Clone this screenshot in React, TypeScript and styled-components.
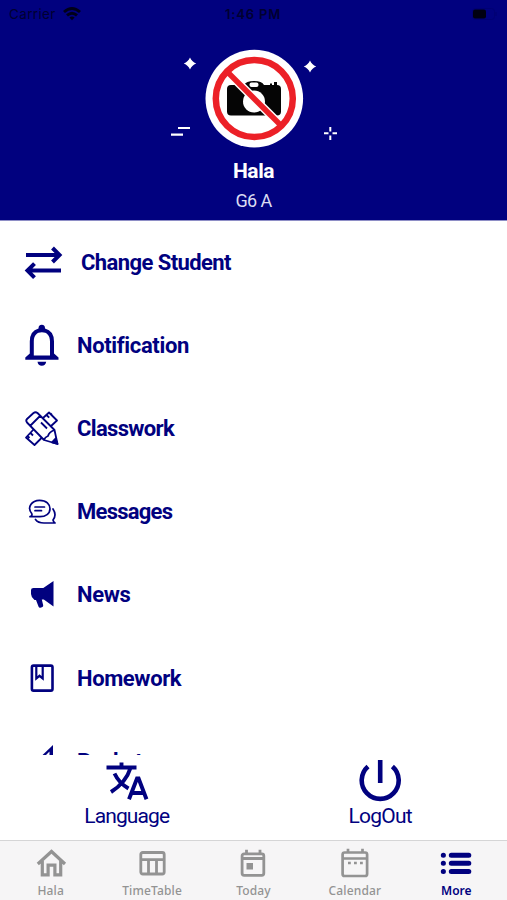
import React from "react";
import styled, { createGlobalStyle } from "styled-components";

const NAVY = "#01017f";
const GREY = "#939393";

const Global = createGlobalStyle`
  * { box-sizing: border-box; }
  html, body { margin: 0; background: #fff; }
  body { font-family: Roboto, "Noto Sans", sans-serif; color: ${NAVY}; }
  svg { display: block; overflow: visible; }
`;

const Screen = styled.div`
  width: 507px;
  height: 900px;
  display: flex;
  flex-direction: column;
  overflow: hidden;
`;

const Header = styled.header`
  height: 221px;
  flex: none;
  background: ${NAVY};
  border-bottom: 1px solid #8e8ec6;
  display: flex;
  flex-direction: column;
  align-items: center;
`;

const StatusBar = styled.div`
  width: 100%;
  height: 28px;
  padding: 0 10px 0 9px;
  display: grid;
  grid-template-columns: 1fr auto 1fr;
  align-items: center;
  font: 13.5px Inter, sans-serif;
  color: #000030;
`;

const Carrier = styled.div`
  display: flex;
  align-items: center;
  gap: 7px;
  letter-spacing: 0.35px;
`;

const Clock = styled.div`
  font-weight: 600;
  font-size: 13px;
  letter-spacing: 0.8px;
`;

const Battery = styled.div`
  justify-self: end;
`;

const Hero = styled.div`
  width: 170px;
  height: 104px;
  margin-top: 18px;
`;

const StudentName = styled.div`
  margin-top: 8px;
  font-size: 21px;
  line-height: 26px;
  font-weight: 700;
  letter-spacing: -0.45px;
  color: #fff;
`;

const Grade = styled.div`
  margin-top: 6px;
  font-size: 18px;
  line-height: 22px;
  letter-spacing: -0.6px;
  color: #dcdcf2;
`;

const Menu = styled.main`
  height: 534px;
  flex: none;
  overflow: hidden;
`;

const Row = styled.div<{ $gap?: number }>`
  height: 83.1px;
  padding-left: 22px;
  display: flex;
  align-items: center;
  gap: ${(p) => p.$gap ?? 15}px;
`;

const RowIcon = styled.div`
  width: 40px;
  height: 44px;
`;

const RowLabel = styled.div<{ $track: number }>`
  padding-top: 1px;
  font-size: 22px;
  line-height: 30px;
  font-weight: 700;
  letter-spacing: ${(p) => p.$track}px;
  white-space: nowrap;
`;

const Actions = styled.div`
  height: 85px;
  flex: none;
  display: grid;
  grid-template-columns: 1fr 1fr;
`;

const Action = styled.div`
  display: flex;
  flex-direction: column;
  align-items: center;
  padding-top: 3px;
`;

const ActionLabel = styled.div<{ $track: number }>`
  font-size: 21px;
  line-height: 29px;
  letter-spacing: ${(p) => p.$track}px;
`;

const Tabs = styled.nav`
  height: 60px;
  flex: none;
  background: #f6f5f6;
  border-top: 1px solid #d5d5d6;
  display: grid;
  grid-template-columns: repeat(5, 1fr);
`;

const Tab = styled.div<{ $active?: boolean }>`
  display: flex;
  flex-direction: column;
  align-items: center;
  padding-top: 5px;
  color: ${(p) => (p.$active ? NAVY : GREY)};
`;

const TabLabel = styled.div<{ $active?: boolean }>`
  margin-top: 3px;
  font: ${(p) => (p.$active ? 600 : 500)} 12px/16px "Noto Sans", sans-serif;
  letter-spacing: ${(p) => (p.$active ? 0 : 0.15)}px;
`;

const WifiIcon = () => (
  <svg width="18" height="14" viewBox="0 0 18 14" fill="none" stroke="#000018" strokeWidth="2.9">
    <path d="M1 5Q9-2 17 5M4 8.400Q9 4 14 8.400" />
    <path d="M6.400 10.500Q9 8.500 11.600 10.500L9 13.300Z" fill="#000018" stroke="none" />
  </svg>
);

const BatteryIcon = () => (
  <svg width="25" height="12" viewBox="0 0 25 12">
    <rect x="0.500" y="0.500" width="22" height="11" rx="3" fill="none" stroke="#000074" />
    <rect x="1" y="1.500" width="13" height="9" rx="2" fill="#000010" />
    <path d="M24 4v4" stroke="#000070" />
  </svg>
);

const Avatar = () => (
  <svg width="170" height="104" viewBox="0 0 170 104">
    <circle cx="85.300" cy="52.600" r="48.800" fill="#fff" />
    <path
      d="M62 39h13q2-4 10-4t10 4h6v-1.500h2V39h2v-3h3v3q4 0 4 4v22.500q0 4-4 4H62q-4 0-4-4V43q0-4 4-4Z"
      fill="#050505"
    />
    <rect x="80.500" y="36.500" width="9" height="4.500" rx="2" fill="#fff" />
    <circle cx="85" cy="55.500" r="11" fill="#fff" />
    <path d="M59 26.500l52 52" stroke="#fff" strokeWidth="8.500" />
    <path d="M59 26.500l52 52" stroke="#ec2027" strokeWidth="5.500" />
    <circle cx="85.300" cy="52.600" r="38.500" fill="none" stroke="#ec2027" strokeWidth="6.500" />
    <path d="M21 11.500Q22.800 15.700 27.200 17.500Q22.800 19.300 21 23.500Q19.200 19.300 14.800 17.500Q19.200 15.700 21 11.500Z" fill="#fff" />
    <path d="M141 14.500Q142.800 18.700 147.200 20.500Q142.800 22.300 141 26.500Q139.200 22.300 134.800 20.500Q139.200 18.700 141 14.500Z" fill="#fff" />
    <path d="M9 82h12M2 88.700h12" stroke="#fff" strokeWidth="2.200" />
    <path d="M161.300 81v4.500M161.300 89.500v4.500M155 87.300h4.500M163.500 87.300h4.500" stroke="#fff" strokeWidth="2" />
  </svg>
);

const SwapIcon = () => (
  <svg width="40" height="44" fill="none" stroke="currentColor" strokeWidth="4">
    <path d="M4 14h33M30.500 7L37.500 14 30.500 21M39 29.600H6M12.500 22.600L5.500 29.600 12.500 36.600" />
  </svg>
);

const BellIcon = () => (
  <svg width="40" height="44" fill="currentColor">
    <path
      fillRule="evenodd"
      d="M16.500 4.500q0-3.700 3.300-3.700T23 4.500q9 2.300 9 13v12l4.500 4v2.300H3.300v-2.300L7.800 29.500v-12Q7.800 6.800 16.500 4.500ZM11.800 31.500h16.200V17.500c0-6-3-9.300-8.100-9.300s-8.100 3.300-8.100 9.300Z"
    />
    <path d="M15.500 37.800h8.700q-.7 3.900-4.400 3.900t-4.300-3.900Z" />
  </svg>
);

const ClassworkIcon = () => (
  <svg width="40" height="44" fill="none" stroke="currentColor" strokeWidth="1.800" strokeLinejoin="round">
    <path d="M5 12l6.500-6q2-1.500 4 0L32.500 23l3 14L22 33 5 15.500q-1.500-2 0-3.500ZM8.500 18.500l9.500-9.500M22 33q1-3 4-4 1-4 6.500-6M19 15.500l6 6" />
    <path d="M21 11l6-5.500 8 8-6.500 6M11.500 22.500l-7.500 8 8.500 7.500 7.500-7.500M25 8.500l2.200 2.200M28.500 6.500l1.500 1.500M8.500 26l2.500 2.500M5.500 29l2 2" />
    <path d="M33.500 31.500l2 5.500-5.500-1.700Z" fill="currentColor" />
  </svg>
);

const MessagesIcon = () => (
  <svg width="40" height="44" fill="none" stroke="currentColor" strokeWidth="1.700" strokeLinecap="round" strokeLinejoin="round">
    <path d="M8 26.500c2-.5 2.300-1.700 1.700-3C4.500 17 10 10.300 17.500 10.300c7 0 10.500 4 10.500 8.500 0 5-4.500 7.900-10 7.900H8ZM13 17h9.500M13 20.700h6.500" />
    <path d="M31 19q4 6 0 11 .5 2.200 2 3H22q-6 0-8.500-3.500" />
  </svg>
);

const NewsIcon = () => (
  <svg width="40" height="44" fill="currentColor">
    <path d="M31.500 8v25.500L21.800 26.500h-2l1.400 5.800q.3 1.500-1.300 2l-1.600.4q-1.200.2-1.700-1L14 27h-1.500Q9 24 9 21V17Q9 15 11.500 15h9.800Z" />
  </svg>
);

const HomeworkIcon = () => (
  <svg width="40" height="44" fill="none" stroke="currentColor" strokeWidth="2.600">
    <rect x="9.900" y="9.600" width="20.600" height="25" rx="1.600" />
    <path d="M14.300 10.500V22.500l3.200-2.700L20.700 22.500V10.500" strokeWidth="2.200" />
  </svg>
);

const PocketIcon = () => (
  <svg width="40" height="44" fill="currentColor">
    <path d="M31 6L19.500 17v11H31Z" />
    <path d="M27.500 12.500v10h-5v-5Z" fill="#fff" />
  </svg>
);

const LanguageIcon = () => (
  <svg width="44" height="44" fill="none" stroke="currentColor" strokeWidth="3.900">
    <path d="M1.500 9.500h30M16.500 4.500v5.500M25.500 10Q21 24.500 6 34M9.500 15.500q4.500 9.500 14 15" />
    <path d="M24 41.300L32 20.500h1.600L41.500 41.300M26.500 35h12.500" />
  </svg>
);

const PowerIcon = () => (
  <svg width="44" height="44" fill="none" stroke="currentColor" strokeWidth="4.400">
    <path d="M10 8.500a18.500 18.500 0 1 0 24.400 0M22.200 2V25" strokeWidth="4.600" />
  </svg>
);

const HomeIcon = () => (
  <svg width="34" height="34" fill="none" stroke="currentColor" strokeWidth="3.200">
    <path d="M3.800 18L17.500 5.500l13.500 12.500M8.300 15v13.800h5.800v-9.700h6.800v9.700h5.800V15" />
  </svg>
);

const TableIcon = () => (
  <svg width="34" height="34" fill="none" stroke="currentColor" strokeWidth="2.800">
    <rect x="5.800" y="6.500" width="23.400" height="21.500" rx="2" />
    <path d="M5.500 13.700h24M13.500 13.700v14M21.500 13.700v14" />
  </svg>
);

const TodayIcon = () => (
  <svg width="34" height="34" fill="none" stroke="currentColor" strokeWidth="2.800">
    <rect x="6.100" y="7.800" width="21.700" height="21.500" rx="2" />
    <path d="M6 12.500h22M10.500 3.800V8M24 3.800V8" />
    <rect x="10.500" y="17" width="6.500" height="6.500" fill="currentColor" stroke="none" />
  </svg>
);

const CalendarIcon = () => (
  <svg width="34" height="34" fill="none" stroke="currentColor" strokeWidth="2.700">
    <rect x="4.600" y="6.500" width="24.500" height="23.500" rx="2" />
    <path d="M5 12.500h24M10 2.800V7M24.500 2.800V7" />
    <path d="M10 17h2.800M16 17h2.800M22 17h2.800" />
  </svg>
);

const MoreIcon = () => (
  <svg width="34" height="34" fill="none" stroke="currentColor" strokeWidth="5" strokeLinecap="round">
    <path d="M12.300 9.200h17.500M12.300 17.300h17.500M12.300 25.500h17.500M4.300 9.200h.1M4.300 17.300h.1M4.300 25.500h.1" />
  </svg>
);

const rows = [
  { label: "Change Student", Icon: SwapIcon, track: -0.58, gap: 19 },
  { label: "Notification", Icon: BellIcon, track: -0.35 },
  { label: "Classwork", Icon: ClassworkIcon, track: -0.65 },
  { label: "Messages", Icon: MessagesIcon, track: -0.75 },
  { label: "News", Icon: NewsIcon, track: -0.35 },
  { label: "Homework", Icon: HomeworkIcon, track: -0.38 },
  { label: "Pocket", Icon: PocketIcon, track: -0.6 },
];

const tabs = [
  { label: "Hala", Icon: HomeIcon },
  { label: "TimeTable", Icon: TableIcon },
  { label: "Today", Icon: TodayIcon },
  { label: "Calendar", Icon: CalendarIcon },
  { label: "More", Icon: MoreIcon, active: true },
];

export default function App() {
  return (
    <Screen>
      <Global />
      <Header>
        <StatusBar>
          <Carrier>Carrier<WifiIcon /></Carrier>
          <Clock>1:46 PM</Clock>
          <Battery><BatteryIcon /></Battery>
        </StatusBar>
        <Hero><Avatar /></Hero>
        <StudentName>Hala</StudentName>
        <Grade>G6 A</Grade>
      </Header>
      <Menu>
        {rows.map(({ label, Icon, track, gap }) => (
          <Row key={label} $gap={gap}>
            <RowIcon><Icon /></RowIcon>
            <RowLabel $track={track}>{label}</RowLabel>
          </Row>
        ))}
      </Menu>
      <Actions>
        <Action><LanguageIcon /><ActionLabel $track={-0.9}>Language</ActionLabel></Action>
        <Action><PowerIcon /><ActionLabel $track={-0.75}>LogOut</ActionLabel></Action>
      </Actions>
      <Tabs>
        {tabs.map(({ label, Icon, active }) => (
          <Tab key={label} $active={active}>
            <Icon />
            <TabLabel $active={active}>{label}</TabLabel>
          </Tab>
        ))}
      </Tabs>
    </Screen>
  );
}
